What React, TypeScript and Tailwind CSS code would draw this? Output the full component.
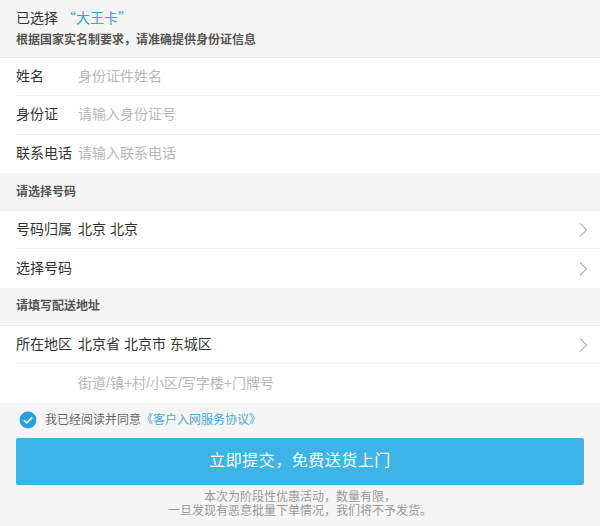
import React from "react";

const Chevron = () => (
  <svg width="10" height="16" viewBox="0 0 10 16" className="shrink-0">
    <path d="M2 1.5 L8.5 8 L2 14.5" fill="none" stroke="#b5b5b5" strokeWidth="1.2" />
  </svg>
);

const Row = ({ label, value, placeholder, arrow, last }: { label?: string; value?: string; placeholder?: string; arrow?: boolean; last?: boolean }) => (
  <div className="bg-white pl-4">
    <div className={`h-[38.3px] flex items-center pr-[12px] ${last ? "" : "border-b border-[#f0f0f0]"}`}>
      <div className="w-[62px] text-[14px] text-[#333] whitespace-nowrap">{label}</div>
      <div className="flex-1 text-[14px]">
        {value ? <span className="text-[#333]">{value}</span> : <span className="text-[#b8b8b8]">{placeholder}</span>}
      </div>
      {arrow && <Chevron />}
    </div>
  </div>
);

const Section = ({ title }: { title: string }) => (
  <div className="h-[38.3px] flex items-center px-4 bg-[#f5f5f5] border-b border-[#ececec] text-[12px] font-bold text-[#555]">{title}</div>
);

export default function App() {
  return (
    <div
      className="w-[600px] h-[526px] bg-[#f5f5f5] overflow-hidden"
      style={{ fontFamily: '"Liberation Sans", "Noto Sans CJK SC", sans-serif' }}
    >
      <div className="h-[58px] px-4 pt-[7px] border-b border-[#ececec]">
        <div className="text-[14px] text-[#333] leading-[20px]">
          已选择 <span className="text-[#2ea6e2]" style={{ fontFamily: '"Noto Sans CJK SC", sans-serif' }}>“大王卡”</span>
        </div>
        <div className="text-[12px] font-bold text-[#555] leading-[18px] mt-[3px]">根据国家实名制要求，请准确提供身份证信息</div>
      </div>
      <Row label="姓名" placeholder="身份证件姓名" />
      <Row label="身份证" placeholder="请输入身份证号" />
      <Row label="联系电话" placeholder="请输入联系电话" last />
      <Section title="请选择号码" />
      <Row label="号码归属" value="北京 北京" arrow />
      <Row label="选择号码" arrow last />
      <Section title="请填写配送地址" />
      <Row label="所在地区" value="北京省 北京市 东城区" arrow />
      <Row placeholder="街道/镇+村/小区/写字楼+门牌号" last />
      <div className="h-[35px] flex items-center px-4 gap-[8px]">
        <svg width="18" height="18" viewBox="0 0 18 18" className="ml-[3px]">
          <circle cx="9" cy="9" r="8.5" fill="#2d9fe0" />
          <path d="M4.8 9.2 L7.8 12 L13.2 6.4" fill="none" stroke="#fff" strokeWidth="1.6" />
        </svg>
        <span className="text-[12px] text-[#666]">
          我已经阅读并同意<span className="text-[#4aa6e0]">《客户入网服务协议》</span>
        </span>
      </div>
      <div className="px-4">
        <div className="h-[47px] bg-[#3cb4e8] rounded-[2px] flex items-center justify-center text-white text-[16px] tracking-[0.5px]">立即提交，免费送货上门</div>
      </div>
      <div className="mt-[5px] text-center text-[12px] text-[#999] leading-[14px]">
        <div>本次为阶段性优惠活动，数量有限，</div>
        <div>一旦发现有恶意批量下单情况，我们将不予发货。</div>
      </div>
    </div>
  );
}
